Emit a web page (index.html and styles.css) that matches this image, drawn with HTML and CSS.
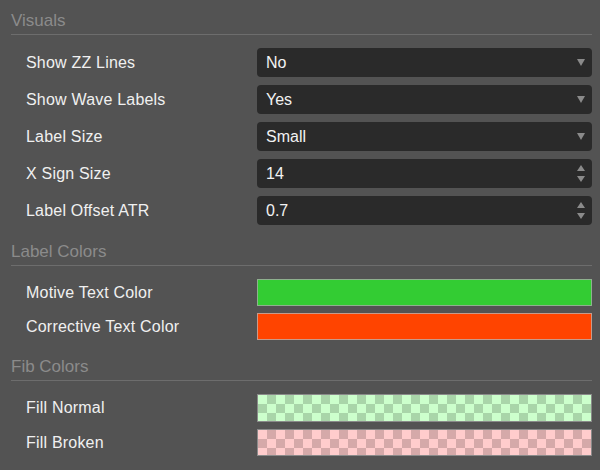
FILE: index.html
```html
<!DOCTYPE html>
<html>
<head>
<meta charset="utf-8">
<link rel="stylesheet" href="styles.css">
</head>
<body>
<div class="panel">
  <section class="section">
    <div class="head">Visuals</div>
    <div class="rows">
      <div class="row"><span class="label">Show ZZ Lines</span>
        <div class="field"><span>No</span><svg class="ico" width="8" height="7" viewBox="0 0 8 7"><path d="M0 0H8L4 7Z" fill="#8a8a8a"/></svg></div></div>
      <div class="row"><span class="label">Show Wave Labels</span>
        <div class="field"><span>Yes</span><svg class="ico" width="8" height="7" viewBox="0 0 8 7"><path d="M0 0H8L4 7Z" fill="#8a8a8a"/></svg></div></div>
      <div class="row"><span class="label">Label Size</span>
        <div class="field"><span>Small</span><svg class="ico" width="8" height="7" viewBox="0 0 8 7"><path d="M0 0H8L4 7Z" fill="#8a8a8a"/></svg></div></div>
      <div class="row"><span class="label">X Sign Size</span>
        <div class="field"><span>14</span><svg class="ico spin" width="8" height="18" viewBox="0 0 8 18"><path d="M4 0L8 6H0Z M0 11H8L4 17Z" fill="#8a8a8a"/></svg></div></div>
      <div class="row"><span class="label">Label Offset ATR</span>
        <div class="field"><span>0.7</span><svg class="ico spin" width="8" height="18" viewBox="0 0 8 18"><path d="M4 0L8 6H0Z M0 11H8L4 17Z" fill="#8a8a8a"/></svg></div></div>
    </div>
  </section>
  <section class="section">
    <div class="head">Label Colors</div>
    <div class="rows tight">
      <div class="row"><span class="label">Motive Text Color</span><div class="swatch green"></div></div>
      <div class="row"><span class="label">Corrective Text Color</span><div class="swatch red"></div></div>
    </div>
  </section>
  <section class="section">
    <div class="head">Fib Colors</div>
    <div class="rows fib">
      <div class="row"><span class="label">Fill Normal</span><div class="swatch check-green"></div></div>
      <div class="row"><span class="label">Fill Broken</span><div class="swatch check-red"></div></div>
    </div>
  </section>
</div>
</body>
</html>
```
FILE: styles.css
```css
html, body {
  margin: 0;
  padding: 0;
  background: #535353;
}
body {
  width: 600px;
  height: 470px;
  overflow: hidden;
  font-family: "Liberation Sans", Arial, sans-serif;
}
.panel {
  padding: 0 8px 0 11px;
}
.section {
  padding-bottom: 6px;
}
.head {
  font-size: 17px;
  line-height: 20px;
  color: #8b8b8b;
  padding-top: 11px;
  padding-bottom: 3px;
  border-bottom: 1px solid #6d6d6d;
}
.rows {
  display: flex;
  flex-direction: column;
  gap: 8px;
  padding-top: 13px;
}
.rows.tight { gap: 7px; }
.rows.fib { gap: 7px; }
.row {
  display: grid;
  grid-template-columns: 231px 1fr;
  align-items: center;
  padding-left: 15px;
}
.label {
  font-size: 16px;
  color: #f0f0f0;
  letter-spacing: 0.2px;
}
.field {
  height: 29px;
  box-sizing: border-box;
  background: #2a2a2a;
  border-radius: 4px;
  display: flex;
  align-items: center;
  justify-content: space-between;
  padding: 0 7px 0 9px;
  font-size: 16px;
  color: #f2f2f2;
}
.ico { display: block; }
.swatch {
  height: 27px;
  box-sizing: border-box;
  border: 1px solid #9a9a9a;
}
.green { background: #33cc33; border-color: #8fb08f; }
.red { background: #ff4400; border-color: #c79a8a; }
.check-green {
  height: 28px;
  border-color: #8a8a8a;
  background-color: #ccffcc;
  background-image:
    linear-gradient(45deg, #a9d5a9 25%, transparent 25%, transparent 75%, #a9d5a9 75%),
    linear-gradient(45deg, #a9d5a9 25%, transparent 25%, transparent 75%, #a9d5a9 75%);
  background-size: 18px 18px;
  background-position: 0 0, 9px 9px;
}
.check-red {
  border-color: #8a8a8a;
  background-color: #ffcccc;
  background-image:
    linear-gradient(45deg, #d5a9a9 25%, transparent 25%, transparent 75%, #d5a9a9 75%),
    linear-gradient(45deg, #d5a9a9 25%, transparent 25%, transparent 75%, #d5a9a9 75%);
  background-size: 18px 18px;
  background-position: 0 0, 9px 9px;
}
```
